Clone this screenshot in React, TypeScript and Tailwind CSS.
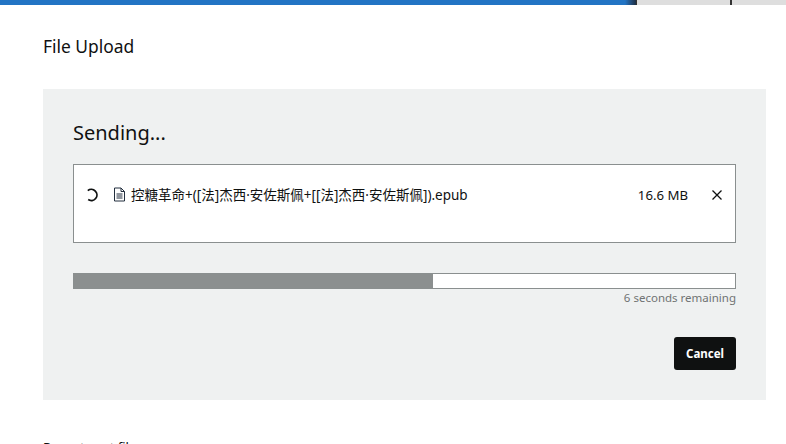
export default function App() {
  return (
    <div className="w-[786px] h-[444px] overflow-hidden bg-white font-['Noto_Sans','Noto_Sans_CJK_SC',sans-serif] text-[#0f1111]">
      <div className="flex h-[5px]">
        <div className="w-[625px] bg-[#2274c4]" />
        <div className="w-[11px] bg-gradient-to-r from-[#2274c4] to-[#1c2f45]" />
        <div className="w-px bg-[#333333]" />
        <div className="w-[93px] bg-[#dedede]" />
        <div className="w-[2px] bg-[#333333]" />
        <div className="flex-1 bg-[#dedede]" />
      </div>
      <div className="px-[43px] pr-[20px]">
        <h1 className="mt-[28px] h-[27px] text-[17.4px] leading-[26px] font-normal">File Upload</h1>
        <div className="mt-[29px] h-[311px] bg-[#eff1f1] pl-[30px] pr-[30px] pt-[30px]">
          <div className="h-[28px] text-[20px] leading-[27px]">Sending...</div>
          <div className="mt-[17px] h-[79px] border border-[#8a8f8f] bg-white flex items-start pt-[20px] pl-[12px] pr-[12px]">
            <svg width="14" height="14" viewBox="0 0 14 14" fill="none" className="mt-[3px]" stroke="#0f1111" strokeWidth="1.8">
              <path d="M1.8 2.6 A5.6 5.6 0 1 1 2.2 11.6" />
            </svg>
            <svg width="13" height="15" viewBox="0 0 13 15" fill="none" className="ml-[13px] mt-[2px]" stroke="#232f3e" strokeWidth="1">
              <path d="M1.5 1H8L11.5 4.5V14H1.5Z" />
              <path d="M8 1V4.5H11.5M3.5 7H9.5M3.5 9H9.5M3.5 11H9.5" />
            </svg>
            <span className="ml-[5px] text-[13.5px] leading-[20px] flex-1 whitespace-nowrap">控糖革命+([法]杰西·安佐斯佩+[[法]杰西·安佐斯佩]).epub</span>
            <span className="text-[13.2px] leading-[20px] whitespace-nowrap">16.6 MB</span>
            <svg width="12" height="12" viewBox="0 0 12 12" fill="none" className="ml-[23px] mt-[4px]" stroke="#0f1111" strokeWidth="1.3">
              <path d="M1.5 1.5L10.5 10.5M10.5 1.5L1.5 10.5" />
            </svg>
          </div>
          <div className="mt-[30px] h-[16px] border border-[#8a8f8f] bg-white">
            <div className="h-full w-[54.3%] bg-[#8b8f8f]" />
          </div>
          <div className="mt-[1px] text-right text-[11.5px] leading-[16px] text-[#6f7373]">6 seconds remaining</div>
          <div className="mt-[31px] flex justify-end">
            <button className="h-[33px] w-[62px] rounded-[3px] bg-[#0f1111] text-white text-[11.5px] font-bold">Cancel</button>
          </div>
        </div>
        <div className="mt-[37px] text-[13px] leading-[20px] whitespace-nowrap">Recent sent files</div>
      </div>
    </div>
  );
}
